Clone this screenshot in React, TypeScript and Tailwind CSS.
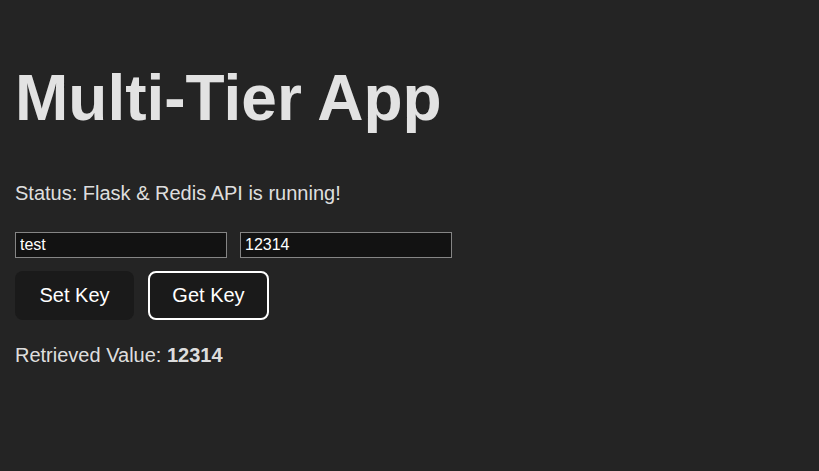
export default function App() {
  return (
    <div
      className="min-h-[471px] w-full bg-[#242424] px-[15px] text-[rgba(255,255,255,0.87)]"
      style={{ fontFamily: '"Liberation Sans", Arial, sans-serif' }}
    >
      <h1 className="pt-[63px] text-[64px] font-bold leading-[70px]">Multi-Tier App</h1>

      <p className="mt-[48px] text-[20px] leading-[24px]">Status: Flask &amp; Redis API is running!</p>

      <div className="mt-[27px] flex gap-[13px]">
        <input
          className="h-[26px] w-[212px] border border-[#858585] bg-[#121212] px-[4px] text-[16px] text-white outline-none"
          defaultValue="test"
        />
        <input
          className="h-[26px] w-[212px] border border-[#858585] bg-[#121212] px-[4px] text-[16px] text-white outline-none"
          defaultValue="12314"
        />
      </div>

      <div className="mt-[13px] flex gap-[14px]">
        <button className="h-[49px] w-[119px] rounded-[8px] border border-transparent bg-[#1a1a1a] pb-[2px] text-[20px] text-white">
          Set Key
        </button>
        <button className="h-[49px] w-[121px] rounded-[8px] border-2 border-white bg-[#1a1a1a] pb-[2px] text-[20px] text-white">
          Get Key
        </button>
      </div>

      <p className="mt-[23px] text-[20px] leading-[24px]">
        Retrieved Value: <strong className="font-bold">12314</strong>
      </p>
    </div>
  );
}
